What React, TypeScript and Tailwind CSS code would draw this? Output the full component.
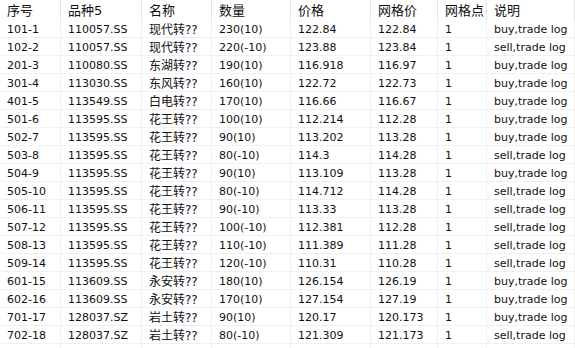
import React from 'react';

const rows: string[][] = [
  ['101-1', '110057.SS', '现代转??', '230(10)', '122.84', '122.84', '1', 'buy,trade log'],
  ['102-2', '110057.SS', '现代转??', '220(-10)', '123.88', '123.84', '1', 'sell,trade log'],
  ['201-3', '110080.SS', '东湖转??', '190(10)', '116.918', '116.97', '1', 'buy,trade log'],
  ['301-4', '113030.SS', '东风转??', '160(10)', '122.72', '122.73', '1', 'buy,trade log'],
  ['401-5', '113549.SS', '白电转??', '170(10)', '116.66', '116.67', '1', 'buy,trade log'],
  ['501-6', '113595.SS', '花王转??', '100(10)', '112.214', '112.28', '1', 'buy,trade log'],
  ['502-7', '113595.SS', '花王转??', '90(10)', '113.202', '113.28', '1', 'buy,trade log'],
  ['503-8', '113595.SS', '花王转??', '80(-10)', '114.3', '114.28', '1', 'sell,trade log'],
  ['504-9', '113595.SS', '花王转??', '90(10)', '113.109', '113.28', '1', 'buy,trade log'],
  ['505-10', '113595.SS', '花王转??', '80(-10)', '114.712', '114.28', '1', 'sell,trade log'],
  ['506-11', '113595.SS', '花王转??', '90(-10)', '113.33', '113.28', '1', 'sell,trade log'],
  ['507-12', '113595.SS', '花王转??', '100(-10)', '112.381', '112.28', '1', 'sell,trade log'],
  ['508-13', '113595.SS', '花王转??', '110(-10)', '111.389', '111.28', '1', 'sell,trade log'],
  ['509-14', '113595.SS', '花王转??', '120(-10)', '110.31', '110.28', '1', 'sell,trade log'],
  ['601-15', '113609.SS', '永安转??', '180(10)', '126.154', '126.19', '1', 'buy,trade log'],
  ['602-16', '113609.SS', '永安转??', '170(10)', '127.154', '127.19', '1', 'buy,trade log'],
  ['701-17', '128037.SZ', '岩土转??', '90(10)', '120.17', '120.173', '1', 'buy,trade log'],
  ['702-18', '128037.SZ', '岩土转??', '80(-10)', '121.309', '121.173', '1', 'sell,trade log'],
];

const headers = ['序号', '品种5', '名称', '数量', '价格', '网格价', '网格点', '说明'];

const cols = 'grid grid-cols-[61px_81px_70px_79px_80px_67px_49px_1fr]';

export default function App() {
  return (
    <div
      className="w-[575px] h-[348px] overflow-hidden bg-white text-[11px] text-[#101010]"
      style={{ fontFamily: '"DejaVu Sans", "Noto Sans CJK SC", sans-serif' }}
    >
      <div className={`${cols} h-[20px]`}>
        {headers.map((h, i) => (
          <div key={i} className="border-r border-[#e5e5e5] pl-[7px] flex items-center text-[13px] leading-none">
            {h}
          </div>
        ))}
      </div>
      {rows.map((r, ri) => (
        <div key={ri} className={`${cols} h-[18px] border-b border-[#f0f0f0]`}>
          {r.map((c, ci) => (
            <div
              key={ci}
              className={`border-r border-[#f0f0f0] pl-[7px] pt-[2px] flex items-center whitespace-nowrap leading-none ${ci === 2 ? 'text-[12px]' : ''}`}
            >
              {c}
            </div>
          ))}
        </div>
      ))}
      <div className={`${cols} h-[18px]`}>
        {headers.map((_, i) => (
          <div key={i} className="border-r border-[#f0f0f0]" />
        ))}
      </div>
    </div>
  );
}
